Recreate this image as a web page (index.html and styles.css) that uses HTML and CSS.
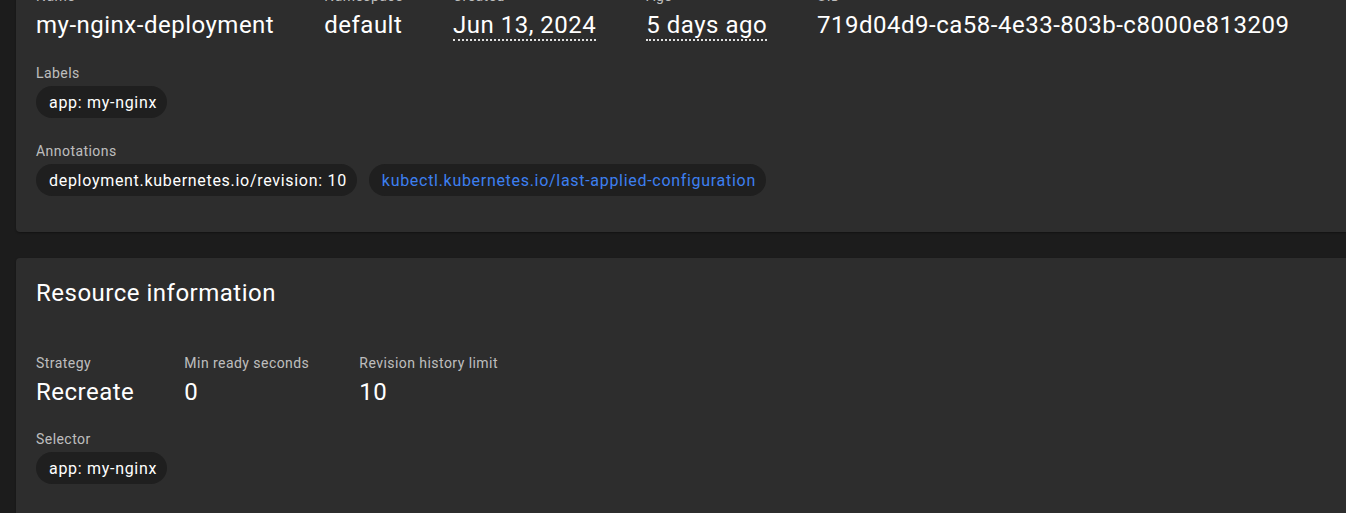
FILE: index.html
```html
<!DOCTYPE html>
<html>
<head>
<meta charset="utf-8">
<link rel="stylesheet" href="styles.css">
</head>
<body>
<div class="page">
  <section class="card card-meta">
    <div class="row">
      <div class="field">
        <div class="label">Name</div>
        <div class="value">my-nginx-deployment</div>
      </div>
      <div class="field">
        <div class="label">Namespace</div>
        <div class="value">default</div>
      </div>
      <div class="field">
        <div class="label">Created</div>
        <div class="value"><span class="dotted">Jun 13, 2024</span></div>
      </div>
      <div class="field">
        <div class="label">Age</div>
        <div class="value"><span class="dotted">5 days ago</span></div>
      </div>
      <div class="field">
        <div class="label">UID</div>
        <div class="value">719d04d9-ca58-4e33-803b-c8000e813209</div>
      </div>
    </div>
    <div class="section">
      <div class="label">Labels</div>
      <div class="chips">
        <span class="chip">app: my-nginx</span>
      </div>
    </div>
    <div class="section">
      <div class="label">Annotations</div>
      <div class="chips">
        <span class="chip">deployment.kubernetes.io/revision: 10</span>
        <span class="chip chip-link">kubectl.kubernetes.io/last-applied-configuration</span>
      </div>
    </div>
  </section>

  <section class="card card-resource">
    <h2 class="title">Resource information</h2>
    <div class="row">
      <div class="field">
        <div class="label">Strategy</div>
        <div class="value">Recreate</div>
      </div>
      <div class="field">
        <div class="label">Min ready seconds</div>
        <div class="value">0</div>
      </div>
      <div class="field">
        <div class="label">Revision history limit</div>
        <div class="value">10</div>
      </div>
    </div>
    <div class="section">
      <div class="label">Selector</div>
      <div class="chips">
        <span class="chip">app: my-nginx</span>
      </div>
    </div>
  </section>
</div>
</body>
</html>
```

FILE: styles.css
```css
html, body {
  margin: 0;
  padding: 0;
  height: 100%;
  overflow: hidden;
}

body {
  background: #1c1c1c;
  font-family: Roboto, "Noto Sans", "Liberation Sans", sans-serif;
  color: #ffffff;
}

.page {
  margin-top: -34px;
  padding-left: 16px;
  display: flex;
  flex-direction: column;
  gap: 26px;
}

.card {
  background: #2d2d2d;
  border-radius: 4px 0 0 4px;
  box-shadow: 0 1px 2px rgba(0, 0, 0, 0.35);
  padding: 20px 20px 36px 20px;
}

.card-resource {
  padding-top: 19px;
  padding-bottom: 60px;
}

.title {
  margin: 0 0 44px 0;
  font-size: 24px;
  line-height: 32px;
  font-weight: 400;
  letter-spacing: 0.5px;
  color: #ffffff;
}

.row {
  display: flex;
  gap: 50px;
}

.field {
  display: flex;
  flex-direction: column;
}

.label {
  font-size: 14px;
  line-height: 20px;
  letter-spacing: 0.45px;
  color: rgba(255, 255, 255, 0.7);
}

.field .label {
  margin-bottom: 3px;
}

.value {
  font-size: 24px;
  line-height: 32px;
  letter-spacing: 0.5px;
  color: #ffffff;
  white-space: nowrap;
}

.dotted {
  border-bottom: 2px dotted rgba(255, 255, 255, 0.85);
}

.section {
  margin-top: 22px;
}

.section + .section {
  margin-top: 23px;
}

.card-resource .section {
  margin-top: 21px;
}

.chips {
  display: flex;
  gap: 12px;
  margin-top: 3px;
}

.chip {
  display: inline-flex;
  align-items: center;
  height: 32px;
  padding: 0 10px 0 13px;
  border-radius: 16px;
  background: #1f1f1f;
  font-size: 16px;
  letter-spacing: 0.7px;
  color: #ffffff;
  white-space: nowrap;
}

.chip-link {
  color: #3d7ff0;
}
```
